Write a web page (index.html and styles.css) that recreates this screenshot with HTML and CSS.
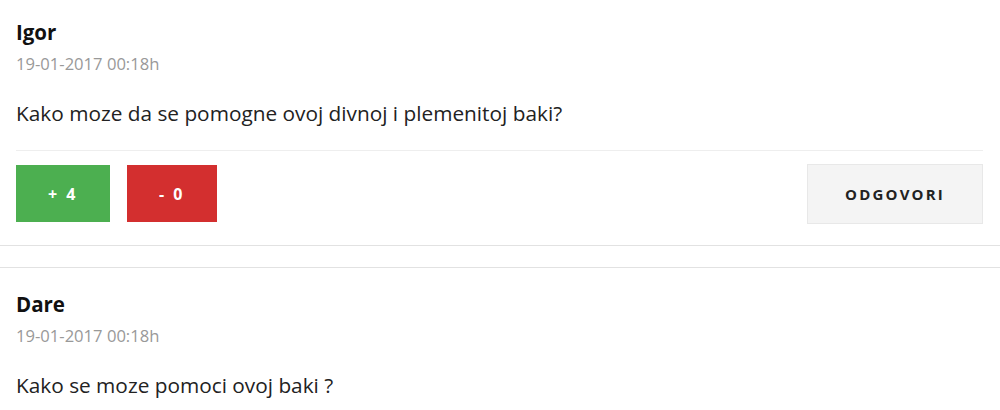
FILE: index.html
```html
<!DOCTYPE html>
<html lang="sr">
<head>
  <meta charset="UTF-8" />
  <meta name="viewport" content="width=device-width, initial-scale=1.0" />
  <title>Komentari</title>
  <link rel="stylesheet" href="styles.css">
</head>
<body>
  <ul class="comments">
    <li class="comment">
      <div class="comment-author">Igor</div>
      <div class="comment-date">19-01-2017 00:18h</div>
      <p class="comment-text">Kako moze da se pomogne ovoj divnoj i plemenitoj baki?</p>
      <div class="comment-actions">
        <div class="votes">
          <button class="vote vote-up">+ 4</button>
          <button class="vote vote-down">- 0</button>
        </div>
        <button class="reply">ODGOVORI</button>
      </div>
    </li>
    <li class="comment">
      <div class="comment-author">Dare</div>
      <div class="comment-date">19-01-2017 00:18h</div>
      <p class="comment-text">Kako se moze pomoci ovoj baki ?</p>
    </li>
  </ul>
</body>
</html>
```

FILE: styles.css
```css
body {
  margin: 0;
  background: #fff;
  font-family: "Open Sans", Arial, sans-serif;
  color: #222;
}
.comments {
  list-style: none;
  margin: -5px 0 0 0;
  padding: 0;
}
.comment {
  border-top: 1px solid #e2e2e2;
  border-bottom: 1px solid #e2e2e2;
  margin-bottom: 21px;
  padding: 22px 17px 21px 16px;
}
.comment-author {
  font-size: 20.5px;
  font-weight: bold;
  line-height: 28px;
  color: #111;
}
.comment-date {
  margin-top: 7px;
  font-size: 16.6px;
  line-height: 22px;
  color: #999;
}
.comment-text {
  margin: 24px 0 0 0;
  padding-bottom: 23px;
  border-bottom: 1px solid #eeeeee;
  font-size: 20.8px;
  line-height: 28px;
  color: #222;
}
.comment-actions {
  display: flex;
  justify-content: space-between;
  align-items: flex-start;
  margin-top: 14px;
}
.votes {
  display: flex;
  gap: 17px;
}
.vote {
  height: 57px;
  padding: 0 32px;
  border: none;
  color: #fff;
  font-family: "Open Sans", Arial, sans-serif;
  font-size: 16px;
  font-weight: bold;
  letter-spacing: 2.5px;
  cursor: pointer;
}
.vote-up {
  background: #4caf50;
}
.vote-down {
  background: #d32f2f;
}
.reply {
  height: 60px;
  width: 176px;
  margin-top: -1px;
  border: 1px solid #e8e8e8;
  background: #f4f4f4;
  color: #222;
  font-family: "Open Sans", Arial, sans-serif;
  font-size: 15px;
  font-weight: bold;
  letter-spacing: 2.2px;
  cursor: pointer;
}
```
